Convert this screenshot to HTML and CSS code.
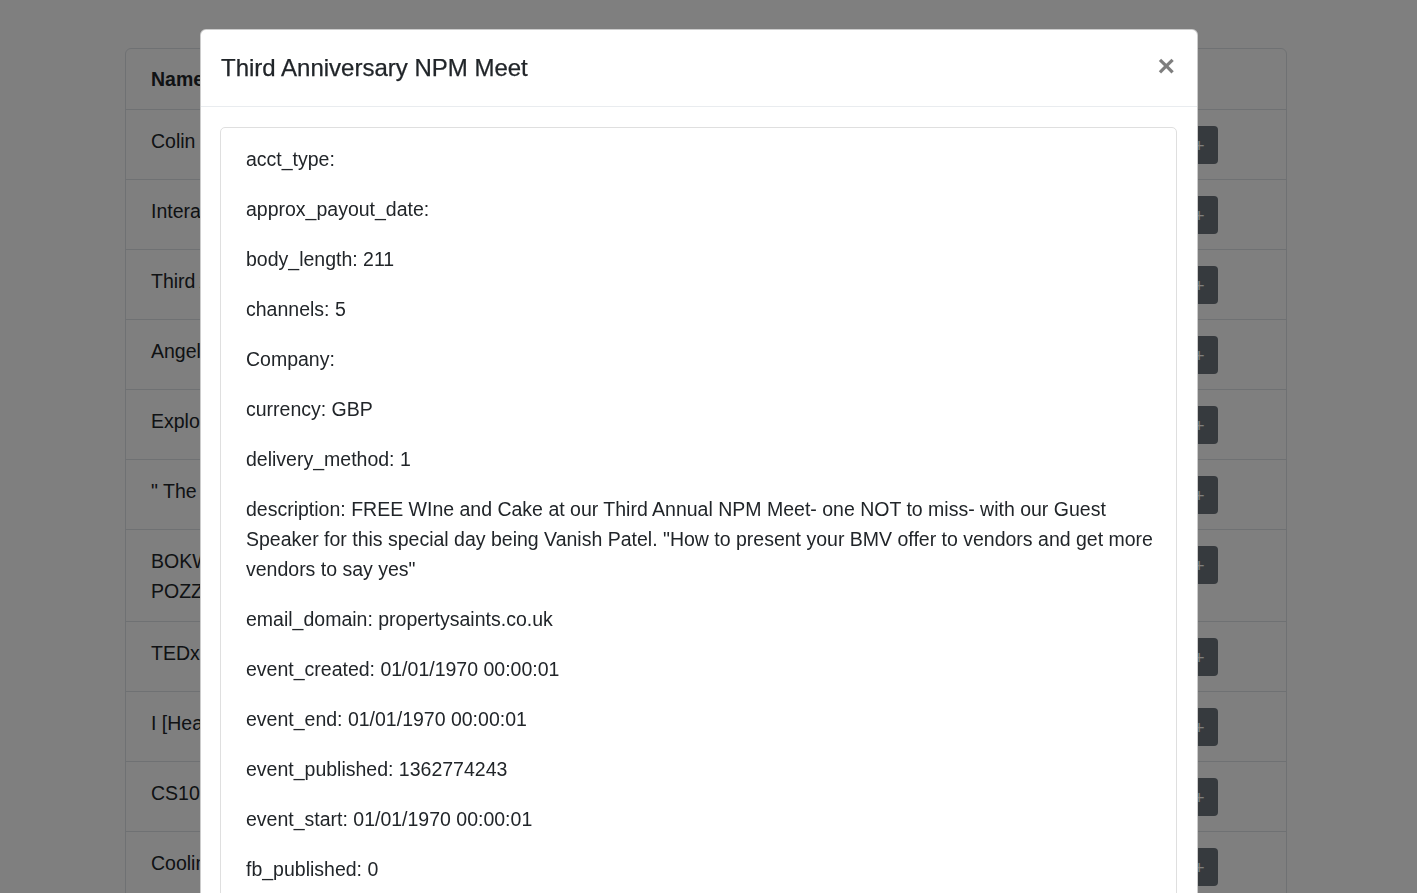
FILE: index.html
```html
<!DOCTYPE html>
<html lang="en">
<head>
<meta charset="utf-8">
<title>Events</title>
<link rel="stylesheet" href="styles.css">
</head>
<body>
<main class="page">
  <div class="table-card">
    <div class="trow thead">
      <div class="cell name">Name</div>
      <div class="cell">Date</div>
      <div class="cell">Location</div>
      <div class="cell action"></div>
    </div>
    <div class="trow">
      <div class="cell name">Colin Morris Talk</div>
      <div class="cell">12/03/2013</div>
      <div class="cell">Manchester</div>
      <div class="cell action"><button class="btn">+</button></div>
    </div>
    <div class="trow">
      <div class="cell name">Interactive Design Meetup</div>
      <div class="cell">14/03/2013</div>
      <div class="cell">Leeds</div>
      <div class="cell action"><button class="btn">+</button></div>
    </div>
    <div class="trow">
      <div class="cell name">Third Anniversary NPM Meet</div>
      <div class="cell">15/03/2013</div>
      <div class="cell">London</div>
      <div class="cell action"><button class="btn">+</button></div>
    </div>
    <div class="trow">
      <div class="cell name">Angel Investors Evening</div>
      <div class="cell">18/03/2013</div>
      <div class="cell">Bristol</div>
      <div class="cell action"><button class="btn">+</button></div>
    </div>
    <div class="trow">
      <div class="cell name">Explore Manchester</div>
      <div class="cell">19/03/2013</div>
      <div class="cell">Manchester</div>
      <div class="cell action"><button class="btn">+</button></div>
    </div>
    <div class="trow">
      <div class="cell name">" The Social Network "</div>
      <div class="cell">20/03/2013</div>
      <div class="cell">Glasgow</div>
      <div class="cell action"><button class="btn">+</button></div>
    </div>
    <div class="trow">
      <div class="cell name">BOKWANG FESTIVAL POZZALLO MUSIC WEEK</div>
      <div class="cell">22/03/2013</div>
      <div class="cell">Pozzallo</div>
      <div class="cell action"><button class="btn">+</button></div>
    </div>
    <div class="trow">
      <div class="cell name">TEDxSalford</div>
      <div class="cell">23/03/2013</div>
      <div class="cell">Salford</div>
      <div class="cell action"><button class="btn">+</button></div>
    </div>
    <div class="trow">
      <div class="cell name">I [Heart] Startups</div>
      <div class="cell">25/03/2013</div>
      <div class="cell">Cambridge</div>
      <div class="cell action"><button class="btn">+</button></div>
    </div>
    <div class="trow">
      <div class="cell name">CS101 Coding Night</div>
      <div class="cell">27/03/2013</div>
      <div class="cell">Oxford</div>
      <div class="cell action"><button class="btn">+</button></div>
    </div>
    <div class="trow">
      <div class="cell name">Cooling Towers Tour</div>
      <div class="cell">28/03/2013</div>
      <div class="cell">York</div>
      <div class="cell action"><button class="btn">+</button></div>
    </div>
    <div class="trow">
      <div class="cell name">Startup Weekend</div>
      <div class="cell">30/03/2013</div>
      <div class="cell">Liverpool</div>
      <div class="cell action"><button class="btn">+</button></div>
    </div>
  </div>
</main>

<div class="backdrop"></div>

<div class="modal">
  <div class="modal-dialog">
    <div class="modal-content">
      <div class="modal-header">
        <h5 class="modal-title">Third Anniversary NPM Meet</h5>
        <button class="close" aria-label="Close">&times;</button>
      </div>
      <div class="modal-body">
        <div class="card">
          <p>acct_type:</p>
          <p>approx_payout_date:</p>
          <p>body_length: 211</p>
          <p>channels: 5</p>
          <p>Company:</p>
          <p>currency: GBP</p>
          <p>delivery_method: 1</p>
          <p>description: FREE WIne and Cake at our Third Annual NPM Meet- one NOT to miss- with our Guest Speaker for this special day being Vanish Patel. "How to present your BMV offer to vendors and get more vendors to say yes"</p>
          <p>email_domain: propertysaints.co.uk</p>
          <p>event_created: 01/01/1970 00:00:01</p>
          <p>event_end: 01/01/1970 00:00:01</p>
          <p>event_published: 1362774243</p>
          <p>event_start: 01/01/1970 00:00:01</p>
          <p>fb_published: 0</p>
          <p>gts: 0</p>
          <p>has_analytics: 0</p>
        </div>
      </div>
    </div>
  </div>
</div>
</body>
</html>
```

FILE: styles.css
```css
* { box-sizing: border-box; }

html, body {
  margin: 0;
  height: 100%;
  overflow: hidden;
}

body {
  font-family: "Liberation Sans", Arial, sans-serif;
  font-size: 19.5px;
  line-height: 30px;
  color: #212529;
  background: #fff;
}

.page {
  padding: 48px 130px 0 125px;
}

.table-card {
  width: 1162px;
  border: 1px solid #dee2e6;
  border-radius: 6px;
}

.trow {
  display: grid;
  grid-template-columns: 301px 1fr 1fr 115px;
  border-top: 1px solid #dee2e6;
}

.thead {
  border-top: none;
  font-weight: 700;
}

.cell {
  padding: 16px 16px 15px 25px;
}

.thead .cell {
  padding-top: 15px;
}

.action {
  padding: 16px 68px 15px 0;
  display: flex;
  justify-content: flex-end;
  align-items: flex-start;
}

.btn {
  width: 38px;
  height: 38px;
  border: none;
  border-radius: 4px;
  background: #6c757d;
  color: #fff;
  font-family: inherit;
  font-size: 19px;
  line-height: 1;
  padding: 0;
}

.backdrop {
  position: fixed;
  inset: 0;
  background: rgba(0, 0, 0, 0.5);
}

.modal {
  position: fixed;
  inset: 0;
  overflow: hidden;
}

.modal-dialog {
  width: 998px;
  margin: 29px 0 0 200px;
}

.modal-content {
  background: #fff;
  border: 1px solid rgba(0, 0, 0, 0.2);
  border-radius: 6px;
}

.modal-header {
  display: flex;
  align-items: center;
  justify-content: space-between;
  padding: 20px;
  border-bottom: 1px solid #e9ecef;
}

.modal-title {
  margin: 0;
  font-size: 24px;
  font-weight: 500;
  line-height: 36px;
  color: #212529;
  -webkit-text-stroke: 0.25px #212529;
}

.close {
  border: none;
  background: transparent;
  padding: 0 2px 0 0;
  font-family: "Liberation Sans", Arial, sans-serif;
  font-size: 30px;
  font-weight: 700;
  line-height: 1;
  color: #000;
  opacity: 0.5;
  margin-top: -4px;
}

.modal-body {
  padding: 20px 20px 20px 19px;
}

.card {
  border: 1px solid #dfdfdf;
  border-radius: 5px;
  padding: 16px 20px 20px 25px;
}

.card p {
  margin: 0 0 20px 0;
}
```
